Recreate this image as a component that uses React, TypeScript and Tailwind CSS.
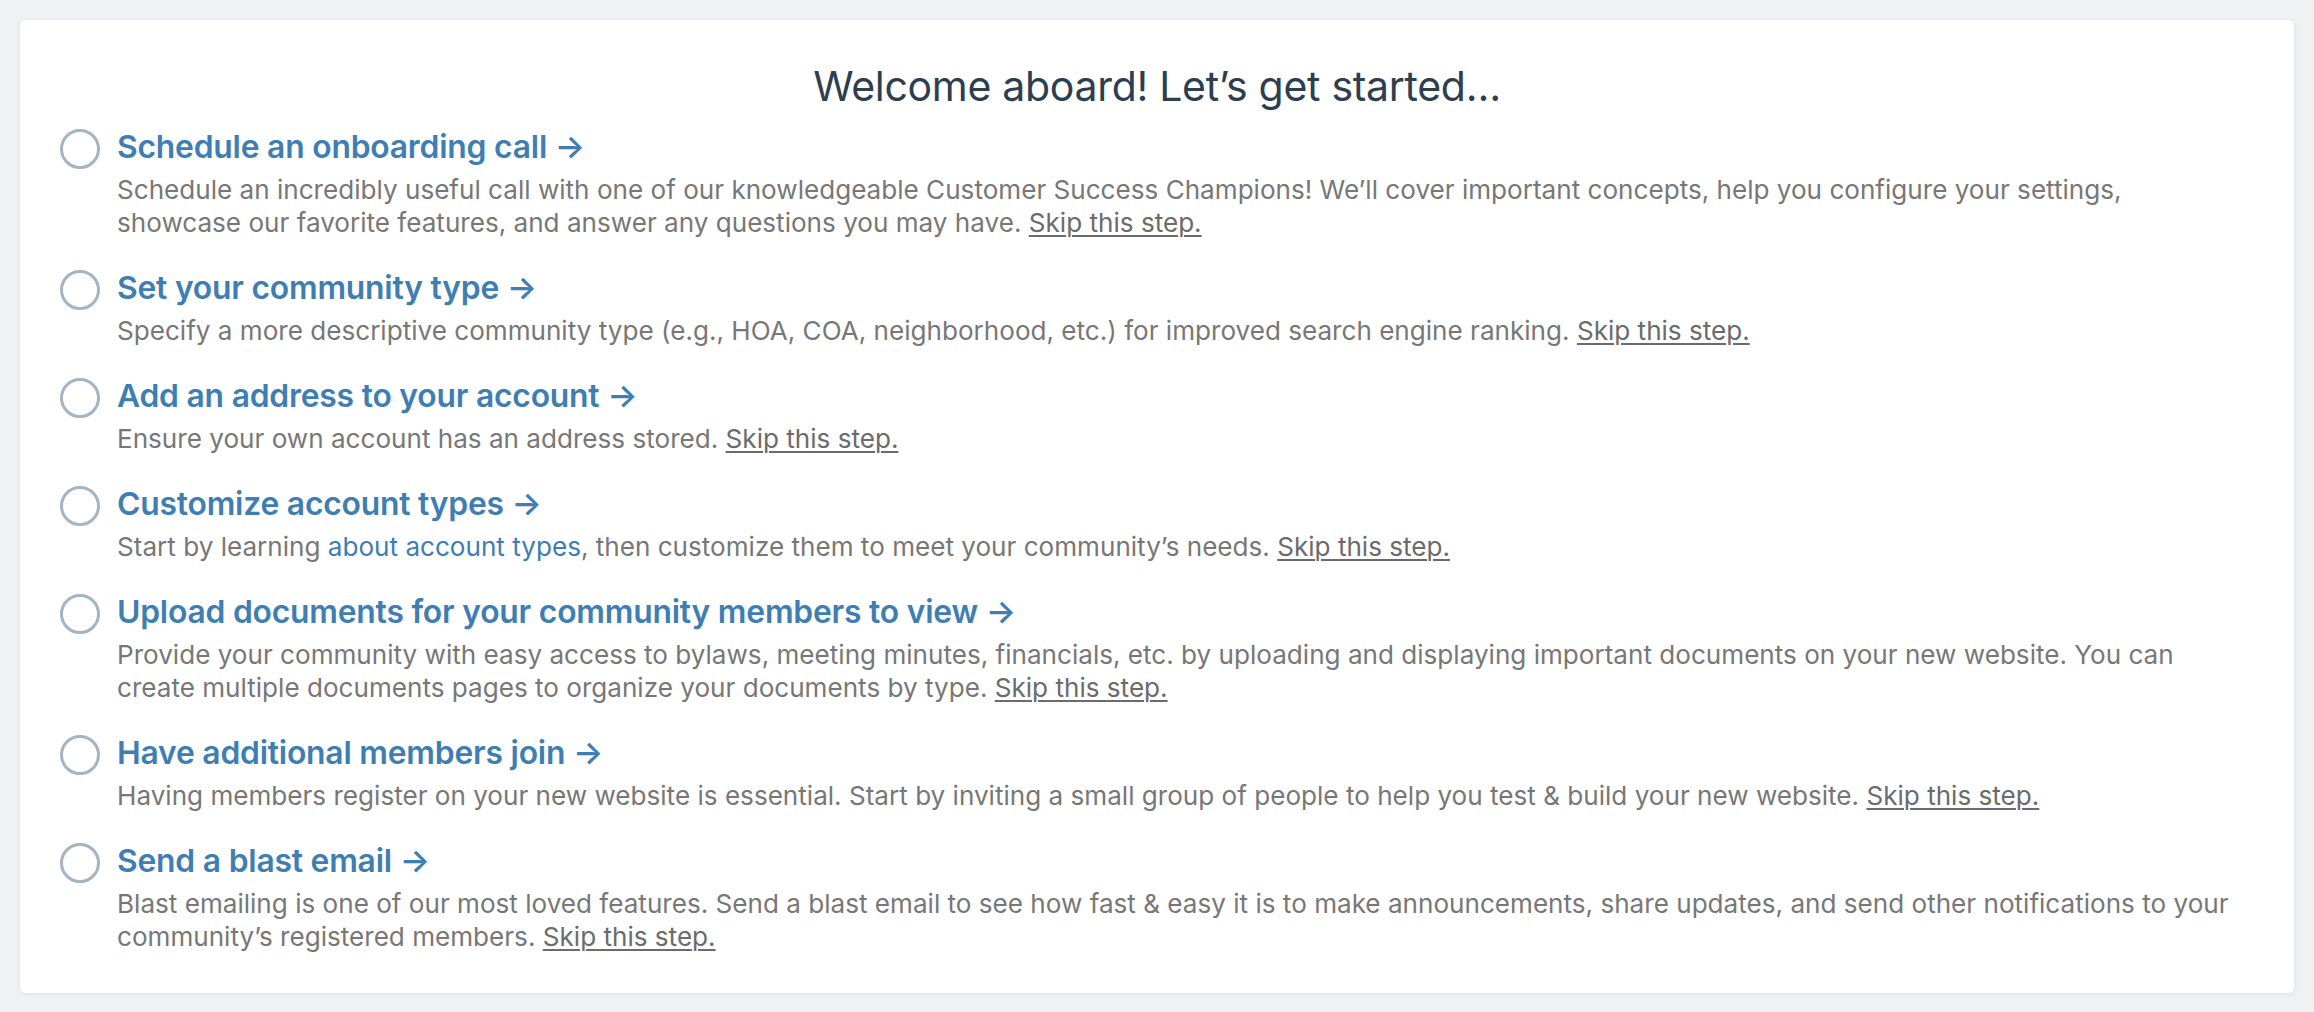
import React from 'react';

type Step = {
  title: string;
  body: React.ReactNode;
};

const Skip: React.FC = () => (
  <a href="#" className="underline underline-offset-[3px] decoration-[1.5px] text-[#6b6b6b]">
    Skip this step.
  </a>
);

const steps: Step[] = [
  {
    title: 'Schedule an onboarding call',
    body: (
      <>
        Schedule an incredibly useful call with one of our knowledgeable Customer Success Champions! We’ll cover
        important concepts, help you configure your settings, showcase our favorite features, and answer any questions
        you may have. <Skip />
      </>
    ),
  },
  {
    title: 'Set your community type',
    body: (
      <>
        Specify a more descriptive community type (e.g., HOA, COA, neighborhood, etc.) for improved search engine
        ranking. <Skip />
      </>
    ),
  },
  {
    title: 'Add an address to your account',
    body: (
      <>
        Ensure your own account has an address stored. <Skip />
      </>
    ),
  },
  {
    title: 'Customize account types',
    body: (
      <>
        Start by learning{' '}
        <a href="#" className="text-[#3e7eb2]">
          about account types
        </a>
        , then customize them to meet your community’s needs. <Skip />
      </>
    ),
  },
  {
    title: 'Upload documents for your community members to view',
    body: (
      <>
        Provide your community with easy access to bylaws, meeting minutes, financials, etc. by uploading and displaying
        important documents on your new website. You can create multiple documents pages to organize your documents by
        type. <Skip />
      </>
    ),
  },
  {
    title: 'Have additional members join',
    body: (
      <>
        Having members register on your new website is essential. Start by inviting a small group of people to help you
        test &amp; build your new website. <Skip />
      </>
    ),
  },
  {
    title: 'Send a blast email',
    body: (
      <>
        Blast emailing is one of our most loved features. Send a blast email to see how fast &amp; easy it is to make
        announcements, share updates, and send other notifications to your community’s registered members. <Skip />
      </>
    ),
  },
];

const App: React.FC = () => {
  return (
    <div className="min-h-screen bg-[#f0f1f3] p-[20px] font-['Inter',sans-serif]">
      <div className="bg-white rounded-[5px] shadow-[0_1px_4px_rgba(0,0,0,0.08)] pl-[40px] pr-[52px] pt-[42px] pb-[40px]">
        <h1 className="text-center pl-[12px] text-[41px] leading-[48px] text-[#2c3e50] font-normal tracking-[-0.3px]">
          Welcome aboard! Let’s get started…
        </h1>

        <ul className="mt-[17px] flex flex-col gap-[29px]">
          {steps.map((step) => (
            <li key={step.title} className="flex items-start gap-[17px]">
              <div className="w-[40px] h-[40px] shrink-0 rounded-full border-[3px] border-[#a3b4c3] mt-[2px]" />
              <div className="flex-1">
                <a href="#" className="block text-[31.8px] leading-[40px] font-semibold text-[#3e7eb2] tracking-[-0.2px]">
                  {step.title} →
                </a>
                <p className="mt-[6px] text-[26.1px] leading-[33px] text-[#777777]">{step.body}</p>
              </div>
            </li>
          ))}
        </ul>
      </div>
    </div>
  );
};

export default App;
